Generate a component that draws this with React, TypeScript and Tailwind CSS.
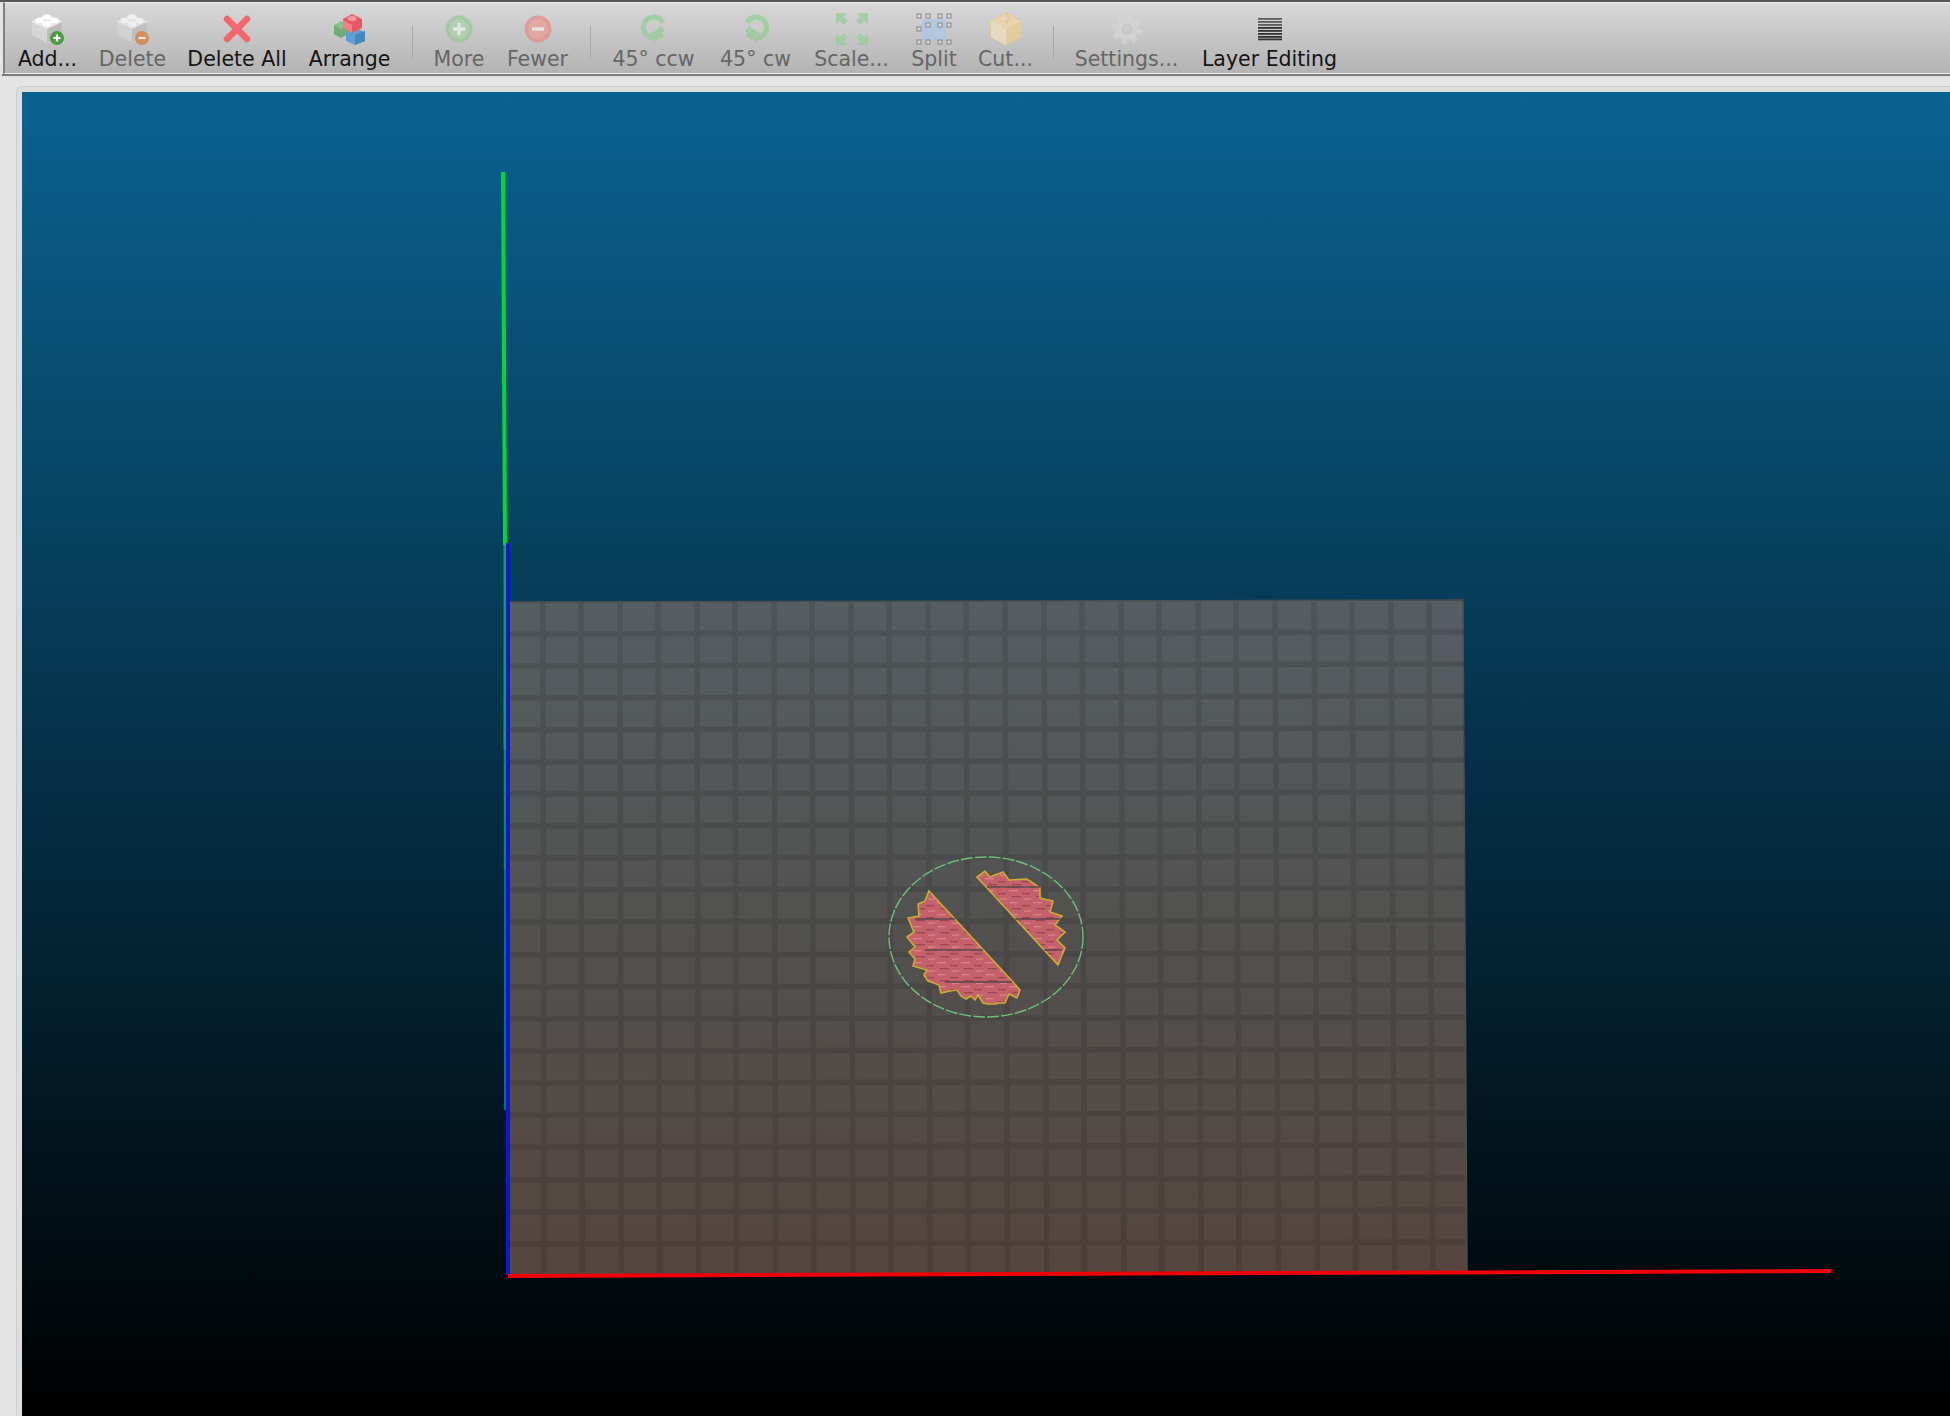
const columns = [545, 583, 622, 660, 699, 737, 776, 814, 853, 891, 930, 968, 1007, 1046, 1084, 1123, 1161, 1200, 1238, 1277, 1316, 1354, 1393, 1431];
const rows = [634, 666, 698, 730, 762, 794, 826, 858, 890, 922, 955, 987, 1019, 1051, 1083, 1115, 1147, 1180, 1212, 1244];

function Brick({ badge }: { badge: "add" | "remove" }) {
  return (
    <svg width="36" height="34" viewBox="0 0 36 34">
      <path d="M2 9 L17 2 L32 9 L32 22 L18 31 L2 22 Z" fill="#e9e9e9" />
      <path d="M2 10 L17 17 L17 31 L2 22 Z" fill="#d6d6d6" />
      <path d="M17 17 L32 10 L32 22 L17 31 Z" fill="#bcbcbc" />
      <ellipse cx="17" cy="5" rx="4.2" ry="2.8" fill="#fff" />
      <ellipse cx="9.5" cy="8.5" rx="4.2" ry="2.8" fill="#fff" />
      <ellipse cx="24.5" cy="8.5" rx="4.2" ry="2.8" fill="#fff" />
      <ellipse cx="17" cy="12" rx="4.2" ry="2.8" fill="#fff" />
      {badge === "add" ? (
        <>
          <circle cx="27" cy="26" r="7" fill="#4f9a45" />
          <path d="M23.5 26 H30.5 M27 22.5 V29.5" stroke="#fff" strokeWidth="2.2" />
        </>
      ) : (
        <>
          <circle cx="27" cy="26" r="7" fill="#d9782f" />
          <path d="M23.5 26 H30.5" stroke="#fff" strokeWidth="2.2" />
        </>
      )}
    </svg>
  );
}

function Cross() {
  return (
    <svg width="28" height="28" viewBox="0 0 28 28">
      <path d="M4 4 L24 24 M24 4 L4 24" stroke="#f2666c" strokeWidth="6.5" strokeLinecap="round" />
    </svg>
  );
}

function Cubes() {
  return (
    <svg width="34" height="32" viewBox="0 0 34 32">
      <path d="M1 12 L8 8 L15 12 L15 21 L8 25 L1 21 Z" fill="#8cc48c" />
      <path d="M1 12 L8 16 L15 12 L15 21 L8 25 L1 21 Z" fill="#6fae72" />
      <path d="M13 19 L22 15 L32 19 L32 28 L22 32 L13 28 Z" fill="#5f9fd6" />
      <path d="M22 22 L32 18 L32 28 L22 32 Z" fill="#4a86bd" />
      <path d="M10 6 L19 1 L29 6 L29 15 L19 20 L10 15 Z" fill="#e85a62" />
      <path d="M10 7 L19 12 L19 20 L10 15 Z" fill="#f08088" />
      <ellipse cx="19" cy="5.5" rx="4.5" ry="2.5" fill="#f59aa0" />
    </svg>
  );
}

function RoundSign({ kind }: { kind: "plus" | "minus" }) {
  const isPlus = kind === "plus";
  return (
    <svg width="28" height="28" viewBox="0 0 28 28">
      <circle cx="14" cy="14" r="13.5" fill={isPlus ? "#94c996" : "#e58a84"} />
      <circle cx="14" cy="14" r="10" fill={isPlus ? "#a8d1a6" : "#ec9a92"} />
      <path d={isPlus ? "M8 14 H20 M14 8 V20" : "M8 14 H20"} stroke="#eef2ee" strokeWidth="3.4" />
    </svg>
  );
}

function Rotate({ flip }: { flip?: boolean }) {
  return (
    <svg width="26" height="30" viewBox="0 0 26 30" className={flip ? "-scale-x-100" : ""}>
      <path d="M22 8.5 A10.5 10.5 0 1 0 21 20" fill="none" stroke="#92cb94" strokeWidth="5" />
      <path d="M20 12 L24 17 L17 22 L11 20 L15 30 L10 24 L7 20 L14 17 Z" fill="#92cb94" />
      <path d="M18 10 A6 6 0 1 0 10 18" fill="none" stroke="#b9dab6" strokeWidth="1.2" />
    </svg>
  );
}

function ScaleArrows() {
  return (
    <svg width="34" height="34" viewBox="0 0 34 34">
      <g fill="#94cf98">
        <path d="M1 1 H12 L9 4 L13 9 L9 13 L4 9 L1 12 Z" />
        <path d="M33 1 H22 L25 4 L21 9 L25 13 L30 9 L33 12 Z" />
        <path d="M1 33 H12 L9 30 L13 25 L9 21 L4 25 L1 22 Z" />
        <path d="M33 33 H22 L25 30 L21 25 L25 21 L30 25 L33 22 Z" />
      </g>
    </svg>
  );
}

function SplitHandles() {
  const handles = [
    [3, 3], [3, 16], [3, 29], [12, 3], [12, 12], [24, 3], [24, 12], [33, 12],
    [12, 29], [24, 29], [33, 29], [33, 3],
  ];
  return (
    <svg width="36" height="32" viewBox="0 0 36 32">
      <rect x="6" y="6" width="24" height="22" rx="3" fill="#a9c6e8" />
      {handles.map(([x, y]) => (
        <rect key={`${x}-${y}`} x={x - 2} y={y - 2} width="4" height="4" fill="#e0e0e0" stroke="#7a7a7a" strokeWidth="1.2" />
      ))}
    </svg>
  );
}

function CutCube() {
  return (
    <svg width="34" height="34" viewBox="0 0 34 34">
      <path d="M17 1 L32 9 L32 25 L17 33 L2 25 L2 9 Z" fill="#f0d9a8" stroke="#ecc98a" strokeWidth="1.5" />
      <path d="M17 17 L32 9 L32 25 L17 33 Z" fill="#eccf8c" />
      <path d="M2 9 L17 17 L17 33 L2 25 Z" fill="#f3e3c0" />
      <path d="M17 1 L21 7 L17 9 L19 13" fill="none" stroke="#dcbb85" strokeWidth="1.2" />
    </svg>
  );
}

function Gear() {
  return (
    <svg width="34" height="32" viewBox="0 0 34 32">
      <circle cx="17" cy="16" r="13" fill="none" stroke="#d6d6d6" strokeWidth="5" strokeDasharray="5.2 5" />
      <circle cx="17" cy="16" r="8.5" fill="none" stroke="#d6d6d6" strokeWidth="6" />
      <circle cx="17" cy="16" r="4.5" fill="none" stroke="#c2c2c2" strokeWidth="1.2" />
    </svg>
  );
}

function LayerStack() {
  const ys = [1, 4, 7, 10, 13, 16, 19, 21.5];
  return (
    <svg width="24" height="24" viewBox="0 0 24 24">
      {ys.map((y, i) => (
        <rect key={y} x="0" y={y} width="24" height="1.8" fill={i < 3 ? "#5c5c5c" : "#333"} />
      ))}
    </svg>
  );
}

const tools = [
  { label: "Add...", width: "w-[61px]", icon: <Brick badge="add" />, active: true },
  { label: "Delete", width: "w-[66px]", icon: <Brick badge="remove" />, active: false },
  { label: "Delete All", width: "w-[100px]", icon: <Cross />, active: true },
  { label: "Arrange", width: "w-[82px]", icon: <Cubes />, active: true },
  { sep: "mr-[-2px]" },
  { label: "More", width: "w-[53px]", icon: <RoundSign kind="plus" />, active: false },
  { label: "Fewer", width: "w-[61px]", icon: <RoundSign kind="minus" />, active: false },
  { sep: "mr-[-1.5px]" },
  { label: "45° ccw", width: "w-[86px]", icon: <Rotate />, active: false },
  { label: "45° cw", width: "w-[75px]", icon: <Rotate flip />, active: false },
  { label: "Scale...", width: "w-[74px]", icon: <ScaleArrows />, active: false },
  { label: "Split", width: "w-[48px]", icon: <SplitHandles />, active: false },
  { label: "Cut...", width: "w-[52px]", icon: <CutCube />, active: false },
  { sep: "mr-[-0.5px]" },
  { label: "Settings...", width: "w-[103px]", icon: <Gear />, active: false },
  { label: "Layer Editing", width: "w-[140px]", icon: <LayerStack />, active: true },
];

function Toolbar() {
  return (
    <div className="h-[72px] ml-[3px] border-l-2 border-[#808080] border-t border-t-[#ededed] border-b border-b-[#f0f0f0] bg-gradient-to-b from-[#d8d8d8] to-[#b3b3b3] flex items-start gap-[21.5px] pl-[12px]">
      {tools.map((tool, i) =>
        tool.sep ? (
          <div key={i} className={`w-[1px] h-[32px] mt-[23px] bg-[#a8a8a8] ${tool.sep}`} />
        ) : (
          <div key={i} className={`${tool.width} flex flex-col items-center`}>
            <div className={`h-[36px] mt-[8px] flex items-center justify-center ${tool.active ? "" : "opacity-70"}`}>
              {tool.icon}
            </div>
            <span className={`text-[20.5px] leading-[24px] whitespace-nowrap ${tool.active ? "text-[#141414]" : "text-[#666]"}`}>
              {tool.label}
            </span>
          </div>
        )
      )}
    </div>
  );
}

function Scene() {
  const left =
    "929,891 1013,982 1020,990 1017,998 1009,994 1005,1003 999,1003 995,1004 988,1004 983,1003 978,995 975,1000 971,996 966,999 961,996 957,990 950,991 941,993 939,985 928,981 924,975 927,970 913,966 915,959 909,952 915,947 907,937 914,932 908,918 919,916 918,904 925,901";
  const right =
    "977,877 985,871 990,877 1003,872 1009,880 1027,879 1040,888 1040,898 1053,901 1050,912 1062,916 1055,925 1065,932 1057,940 1065,948 1062,955 1058,965 987,888";
  return (
    <svg viewBox="22 92 1928 1324" className="w-full h-full block">
      <defs>
        <linearGradient id="plate" x1="0" y1="0" x2="0" y2="1">
          <stop offset="0" stopColor="#565e63" />
          <stop offset="0.5" stopColor="#52514f" />
          <stop offset="1" stopColor="#55463f" />
        </linearGradient>
        <pattern id="hatch" width="24" height="12" patternUnits="userSpaceOnUse">
          <rect width="24" height="12" fill="#c4616a" />
          <rect x="1" y="2" width="9" height="1.3" fill="#d98288" />
          <rect x="14" y="5" width="8" height="1.3" fill="#9a4654" />
          <rect x="4" y="8" width="9" height="1.3" fill="#9a4654" />
          <rect x="16" y="10.5" width="7" height="1.3" fill="#d98288" />
        </pattern>
      </defs>

      <polygon points="509,602 1463,600 1467,1272 509,1276" fill="url(#plate)" stroke="#4c4e4e" strokeWidth="1.5" />
      <g stroke="#000" strokeWidth="5.5" opacity="0.1">
        {columns.map((x, i) => (
          <line key={x} x1={x - 2} y1="602" x2={x - 1 + (i / columns.length) * 3} y2="1273" />
        ))}
        {rows.map((y) => (
          <line key={y} x1="509" y1={y} x2="1465" y2={y - 2} />
        ))}
      </g>

      <ellipse cx="986" cy="937" rx="97" ry="80" fill="none" stroke="#6cc07c" strokeWidth="1.4" strokeDasharray="12 2" />
      <polygon points={left} fill="url(#hatch)" stroke="#c9ae2e" strokeWidth="1.6" />
      <polygon points={right} fill="url(#hatch)" stroke="#c9ae2e" strokeWidth="1.6" />
      <g stroke="#3f3f42" strokeWidth="1.6" strokeOpacity="0.8">
        <line x1="987" y1="887" x2="1040" y2="887" />
        <line x1="915" y1="919" x2="955" y2="919" />
        <line x1="1015" y1="919" x2="1062" y2="919" />
        <line x1="925" y1="950" x2="983" y2="950" />
        <line x1="1044" y1="950" x2="1062" y2="950" />
        <line x1="945" y1="982" x2="1012" y2="982" />
      </g>

      <line x1="503" y1="172" x2="505" y2="545" stroke="#00d92e" strokeWidth="4" />
      <line x1="505" y1="545" x2="505" y2="750" stroke="#0aa542" strokeWidth="3" />
      <line x1="505" y1="750" x2="505" y2="870" stroke="#0b8a60" strokeWidth="2.5" />
      <line x1="505" y1="870" x2="505" y2="1110" stroke="#0b6f80" strokeWidth="2" />
      <line x1="508" y1="543" x2="508" y2="1275" stroke="#0a18dc" strokeWidth="4" />
      <line x1="508" y1="1276" x2="1831" y2="1271" stroke="#f00008" strokeWidth="4" />
    </svg>
  );
}

export default function App() {
  return (
    <div className="w-[1950px] h-[1416px] overflow-hidden bg-[#e4e4e4] flex flex-col font-['DejaVu_Sans',sans-serif]">
      <div className="h-[2px] bg-[#565656]" />
      <Toolbar />
      <div className="h-[2px] ml-[2px] bg-[#7a7a7a]" />
      <div className="flex-1 min-h-0 pl-[16px] pt-[10px] flex flex-col">
        <div className="flex-1 min-h-0 border-t border-l border-[#cdcdcd] rounded-tl-[6px] bg-[#dedede] pl-[5px] pt-[5px] flex flex-col">
          <div className="flex-1 min-h-0 bg-linear-to-b/srgb from-[#0a6291] to-[#000]">
            <Scene />
          </div>
        </div>
      </div>
    </div>
  );
}
